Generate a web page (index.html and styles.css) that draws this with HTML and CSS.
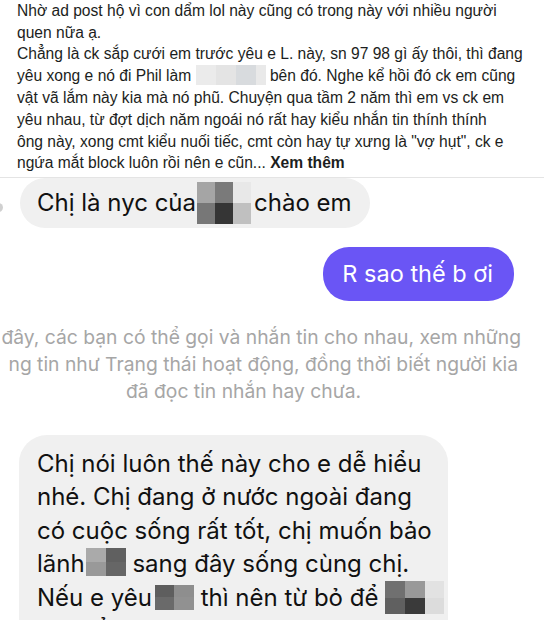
FILE: index.html
```html
<!DOCTYPE html>
<html lang="vi">
<head>
    <meta charset="UTF-8">
    <meta name="viewport" content="width=device-width, initial-scale=1.0">
    <title>Bài viết</title>
    <link rel="stylesheet" href="styles.css">
</head>
<body>
    <div class="post">
        <p class="post-text">
            Nhờ ad post hộ vì con dẩm lol này cũng có trong này với nhiều người<br>
            quen nữa ạ.<br>
            Chẳng là ck sắp cưới em trước yêu e L. này, sn 97 98 gì ấy thôi, thì đang<br>
            yêu xong e nó đi Phil làm <span class="blur-word"><i></i><i></i><i></i><i></i></span> bên đó. Nghe kể hồi đó ck em cũng<br>
            vật vã lắm này kia mà nó phũ. Chuyện qua tầm 2 năm thì em vs ck em<br>
            yêu nhau, từ đợt dịch năm ngoái nó rất hay kiểu nhắn tin thính thính<br>
            ông này, xong cmt kiểu nuối tiếc, cmt còn hay tự xưng là "vợ hụt", ck e<br>
            ngứa mắt block luôn rồi nên e cũn... <b class="more">Xem thêm</b>
        </p>
    </div>

    <div class="shot">
        <div class="row">
            <span class="avatar"></span>
            <div class="bubble in">Chị là nyc của<span class="mosaic m-a"><i></i><i></i><i></i><i></i><i></i><i></i></span>chào em</div>
        </div>
        <div class="row right">
            <div class="bubble out">R sao thế b ơi</div>
        </div>

        <div class="notice">
            <span class="cut-1">đây, các bạn có thể gọi và nhắn tin cho nhau, xem những</span>
            <span class="cut-2">ng tin như Trạng thái hoạt động, đồng thời biết người kia</span>
            <span class="center">đã đọc tin nhắn hay chưa.</span>
        </div>

        <div class="row">
            <div class="bubble in long">
                Chị nói luôn thế này cho e dễ hiểu<br>
                nhé. Chị đang ở nước ngoài đang<br>
                có cuộc sống rất tốt, chị muốn bảo<br>
                lãnh<span class="mosaic m-b"><i></i><i></i><i></i><i></i></span> sang đây sống cùng chị.<br>
                Nếu e yêu<span class="mosaic m-c"><i></i><i></i><i></i><i></i></span> thì nên từ bỏ để <span class="mosaic m-d"><i></i><i></i><i></i><i></i><i></i><i></i></span><br>
                có thể tìm lại hạnh phúc nhé
            </div>
        </div>
    </div>
</body>
</html>
```

FILE: styles.css
```css
* {
    box-sizing: border-box;
}
body {
    margin: 0;
    padding: 0;
    background-color: #fff;
    width: 544px;
    height: 620px;
    overflow: hidden;
}
.post {
    padding: 0 0 3px 17px;
    border-bottom: 1px solid #e4e4e4;
}
.post-text {
    margin: 0;
    font-family: "Liberation Sans", Arial, sans-serif;
    font-size: 15.6px;
    line-height: 21.7px;
    color: #1c1e21;
    white-space: nowrap;
}
.more {
    font-weight: bold;
}
.blur-word {
    display: inline-flex;
    vertical-align: -3.7px;
    height: 20px;
    width: 70px;
}
.blur-word i {
    flex: 1;
}
.blur-word i:nth-child(1) { background: #ebebeb; }
.blur-word i:nth-child(2) { background: #e4e4e4; }
.blur-word i:nth-child(3) { background: #d8dbde; }
.blur-word i:nth-child(4) { background: #e9e9e9; flex: 0.5; }

.shot {
    font-family: Inter, "Noto Sans", sans-serif;
    color: #111;
}
.row {
    display: flex;
    align-items: center;
    padding-left: 20px;
    position: relative;
}
.row.right {
    justify-content: flex-end;
    padding-right: 30px;
    margin-top: 19px;
}
.avatar {
    position: absolute;
    left: -6px;
    top: 25px;
    width: 9px;
    height: 9px;
    border-radius: 50%;
    background: #d0d0d0;
}
.bubble {
    font-size: 24px;
    border-radius: 26px;
}
.bubble.in {
    background: #f0f0f0;
    height: 50px;
    display: flex;
    align-items: center;
    padding: 0 18px 0 17px;
}
.bubble.out {
    background: #6a55f5;
    color: #fff;
    height: 54px;
    display: flex;
    align-items: center;
    padding: 0 21px 0 19px;
    font-size: 23.5px;
}
.mosaic {
    display: inline-grid;
    grid-template-rows: 1fr 1fr;
    grid-auto-flow: column;
}
.m-a {
    width: 54px;
    height: 42px;
    margin: 0 3px 0 1px;
}
.m-a i:nth-child(1) { background: #a5a5a5; }
.m-a i:nth-child(2) { background: #777; }
.m-a i:nth-child(3) { background: #7a7a7a; }
.m-a i:nth-child(4) { background: #353535; }
.m-a i:nth-child(5) { background: #e8e8e8; }
.m-a i:nth-child(6) { background: #c0c0c0; }

.notice {
    display: flex;
    flex-direction: column;
    margin-top: 22.8px;
    font-size: 19.3px;
    line-height: 27px;
    color: #a6a6a6;
    white-space: nowrap;
    overflow: hidden;
}
.cut-1 {
    align-self: flex-end;
    margin-right: 23px;
}
.cut-2 {
    align-self: flex-end;
    margin-right: 26px;
}
.center {
    align-self: flex-start;
    margin-left: 126px;
}

.notice + .row {
    margin-top: 30.6px;
}
.bubble.in.long {
    display: block;
    height: auto;
    width: 429px;
    margin-left: -1px;
    padding: 11.5px 14px 20px 18px;
    line-height: 33.5px;
    border-radius: 28px;
    white-space: nowrap;
}
.long .mosaic {
    vertical-align: bottom;
}
.m-b {
    width: 40px;
    height: 28px;
    margin: 0 0 5px 1px;
}
.m-b i:nth-child(1) { background: #aaa; }
.m-b i:nth-child(2) { background: #999; }
.m-b i:nth-child(3) { background: #606060; }
.m-b i:nth-child(4) { background: #666; }
.m-c {
    width: 39px;
    height: 25px;
    margin: 0 0 4.5px 3px;
}
.m-c i:nth-child(1) { background: #5e5e5e; }
.m-c i:nth-child(2) { background: #6a6a6a; }
.m-c i:nth-child(3) { background: #8e8e8e; }
.m-c i:nth-child(4) { background: #919191; }
.m-d {
    width: 59px;
    height: 33px;
}
.m-d i:nth-child(1) { background: #707070; }
.m-d i:nth-child(2) { background: #606060; }
.m-d i:nth-child(3) { background: #999; }
.m-d i:nth-child(4) { background: #3a3a3a; }
.m-d i:nth-child(5) { background: #e2e2e2; }
.m-d i:nth-child(6) { background: #dcdcdc; }
```
